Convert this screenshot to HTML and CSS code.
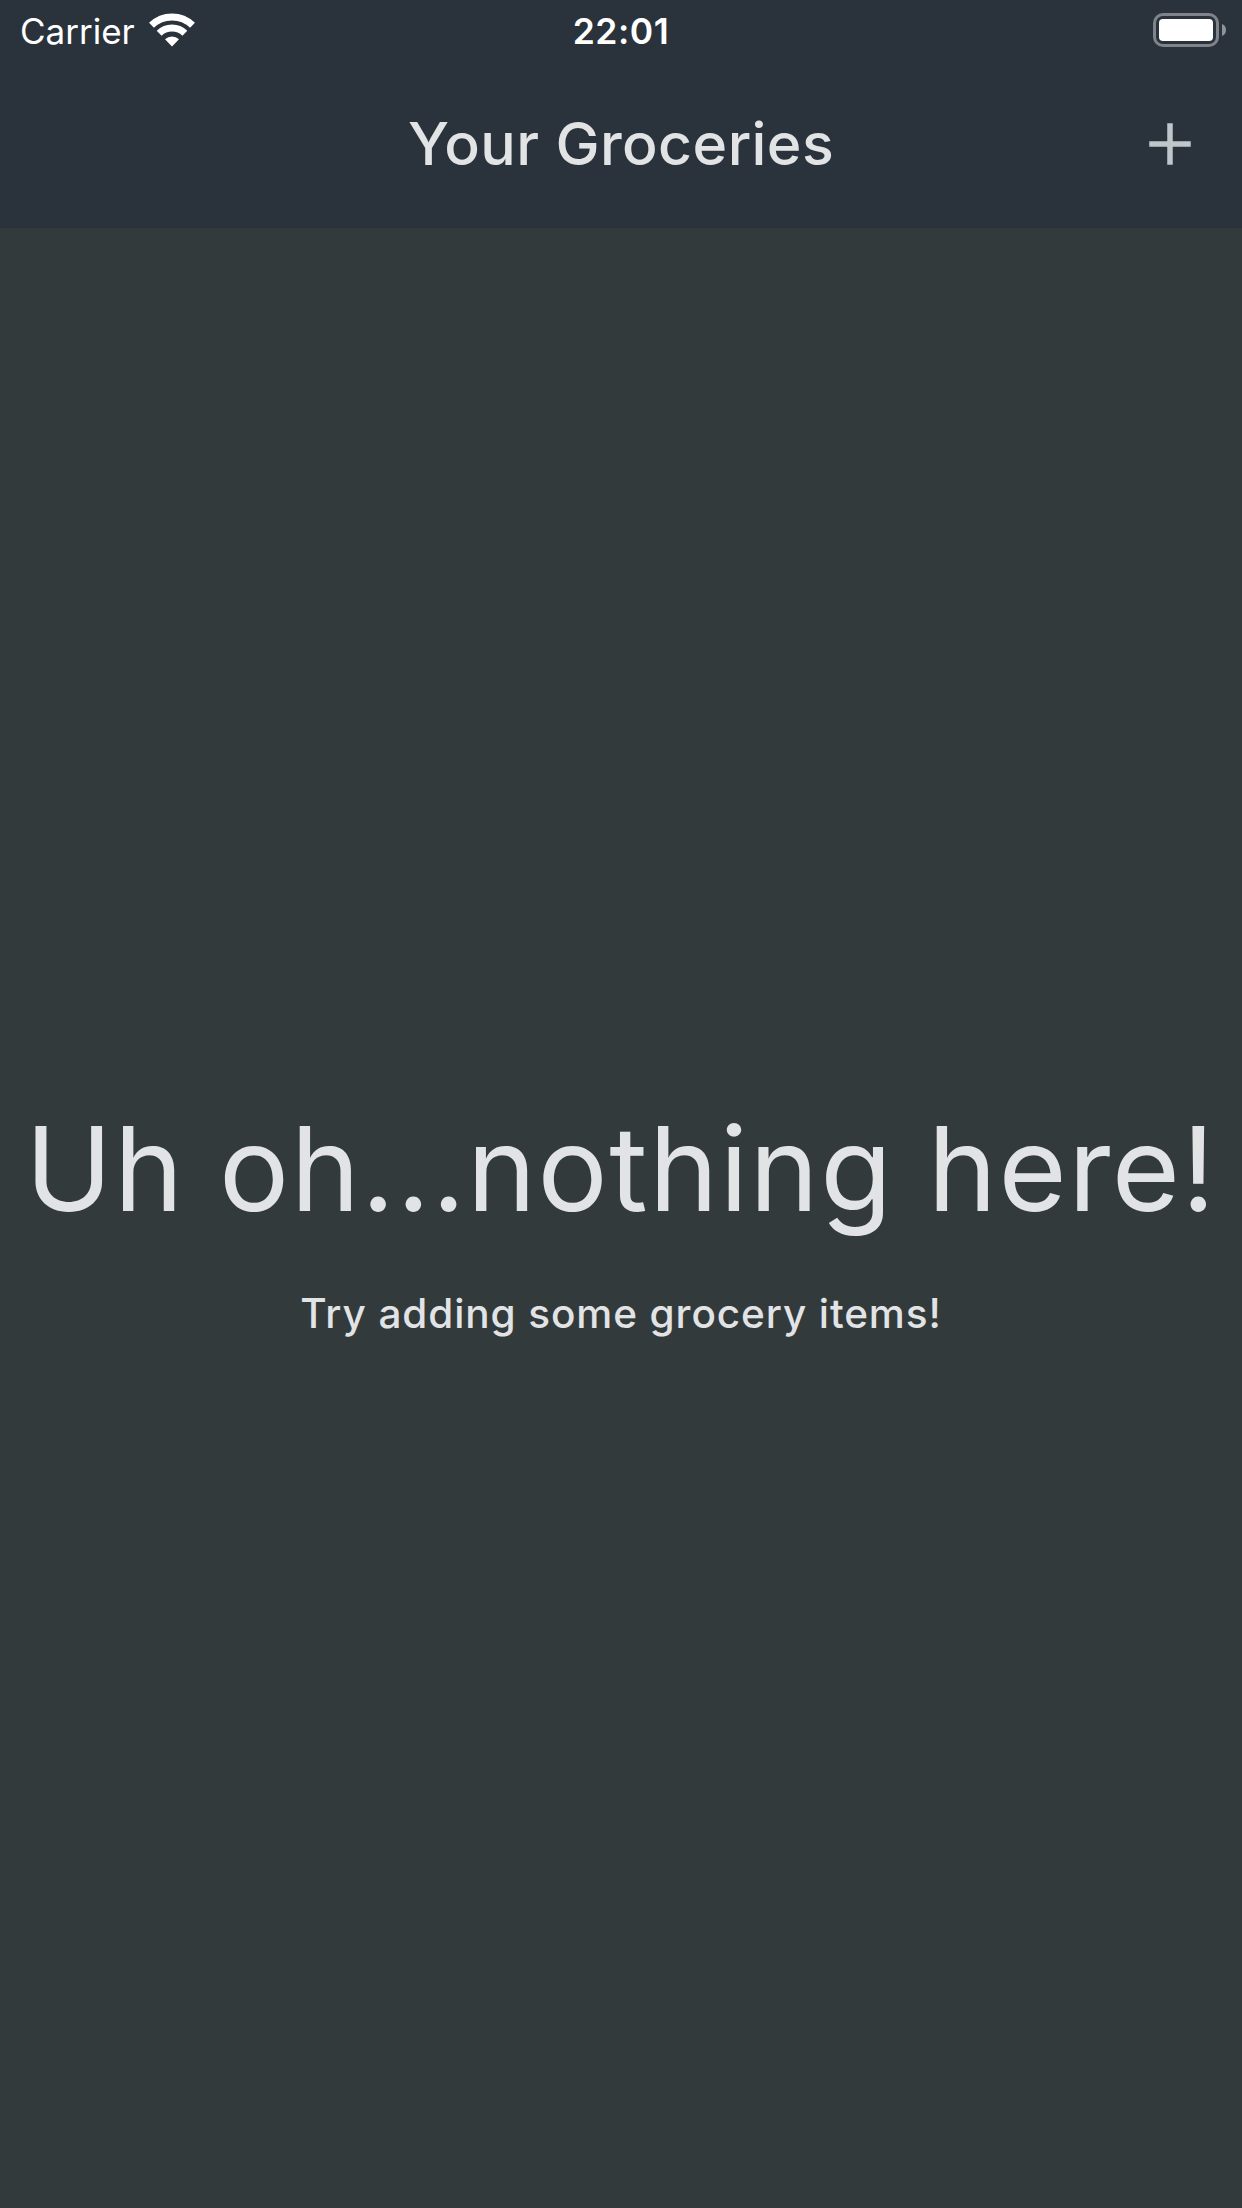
FILE: index.html
```html
<!DOCTYPE html>
<html lang="en">
<head>
<meta charset="utf-8">
<title>Your Groceries</title>
<link rel="stylesheet" href="styles.css">
</head>
<body>
<header class="top">
  <div class="status">
    <div class="status-left">
      <span class="carrier">Carrier</span>
      <svg class="wifi" viewBox="0 0 46 34" width="46" height="34">
        <g fill="none" stroke="#fff">
          <path d="M2.500 12.300A29.500 29.500 0 0 1 43.500 12.300" stroke-width="7"/>
          <path d="M10.150 20.150A18.500 18.500 0 0 1 35.850 20.150" stroke-width="7"/>
        </g>
        <path d="M23 33.500L16 26.300A10 10 0 0 1 30 26.300Z" fill="#fff"/>
      </svg>
    </div>
    <span class="clock">22:01</span>
    <div class="status-right">
      <svg class="battery" viewBox="0 0 74 34" width="74" height="34">
        <rect x="1.500" y="1.500" width="63" height="31" rx="8.500" fill="none" stroke="#7f848a" stroke-width="3"/>
        <rect x="6" y="6" width="54" height="22" rx="4" fill="#fff"/>
        <path d="M69 11Q73 12.500 73 17Q73 21.500 69 23Z" fill="#8f9499"/>
      </svg>
    </div>
  </div>
  <div class="appbar">
    <h1 class="title">Your Groceries</h1>
    <button class="add" aria-label="Add">
      <svg viewBox="0 0 42 42" width="42" height="42"><path d="M18.250 .25h5.500v18h18v5.500h-18v18h-5.500v-18h-18v-5.500h18z" fill="#bfc7cb"/></svg>
    </button>
  </div>
</header>
<main class="empty">
  <p class="headline">Uh oh...nothing here!</p>
  <p class="hint">Try adding some grocery items!</p>
</main>
</body>
</html>
```
FILE: styles.css
```css
* { box-sizing: border-box; }
body { margin: 0; height: 2208px; display: flex; flex-direction: column; background: #323a3c; color: #e2e3e5; font-family: Inter, "Liberation Sans", sans-serif; }
.top { height: 228px; background: #2a323b; }
.status { height: 60px; display: grid; grid-template-columns: 1fr auto 1fr; align-items: center; color: #fff; }
.status-left { display: flex; align-items: center; gap: 14px; padding-left: 20px; }
.carrier { font-size: 35px; line-height: 40px; padding-top: 2px; }
.clock { font-size: 35.5px; line-height: 40px; padding-top: 4px; font-weight: 600; letter-spacing: 0.5px; }
.status-right { display: flex; justify-content: flex-end; padding-right: 15px; }
svg { display: block; }
.appbar { height: 168px; display: grid; grid-template-columns: 144px 1fr 144px; align-items: center; }
.title { grid-column: 2; margin: 0 0 1px; text-align: center; font-size: 59px; font-weight: 500; letter-spacing: 0.4px; }
.add { display: grid; place-items: center; height: 144px; padding: 0; border: 0; background: none; }
.empty { flex: 1; display: flex; flex-direction: column; align-items: center; justify-content: center; }
.headline { margin: 0; font-size: 117px; line-height: 154px; letter-spacing: 1.5px; white-space: nowrap; }
.hint { margin: 38px 0 0; font-size: 40.5px; font-weight: 500; line-height: 60px; letter-spacing: 0.9px; }
```
